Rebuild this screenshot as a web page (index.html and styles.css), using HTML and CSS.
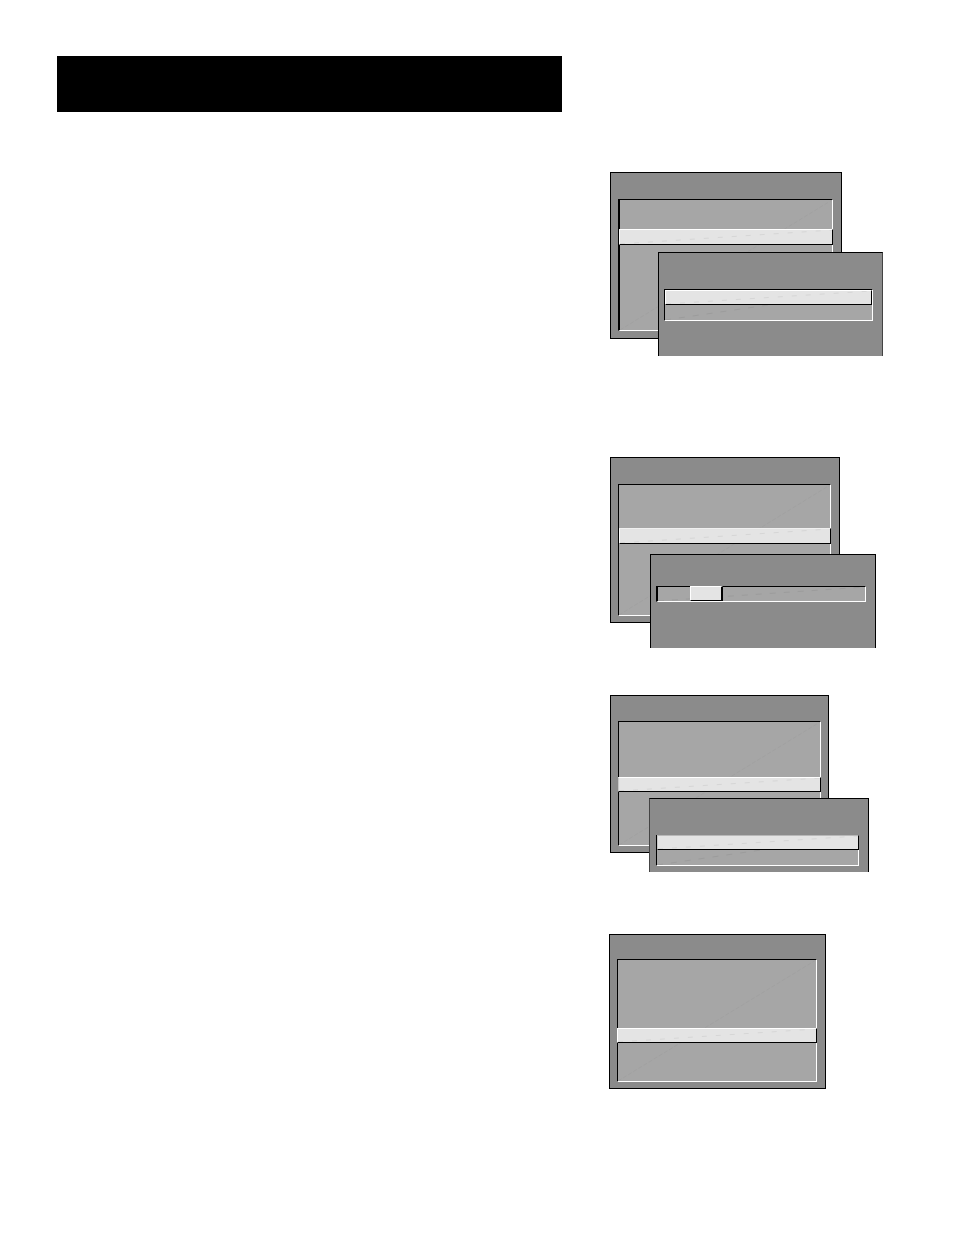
FILE: index.html
```
<!DOCTYPE html>
<html lang="en">
<head>
  <meta charset="UTF-8" />
  <title>Menu Screens</title>
  <link rel="stylesheet" href="styles.css">
</head>
<body>
  <div class="page">
    <header class="title-bar"></header>

    <main class="screens">
      <section class="screen screen-1">
        <div class="panel">
          <div class="list">
            <svg class="sheen" viewBox="0 0 100 100" preserveAspectRatio="none"><line x1="0" y1="100" x2="100" y2="0" /></svg>
            <div class="bar"><svg class="sheen" viewBox="0 0 100 100" preserveAspectRatio="none"><line x1="0" y1="100" x2="100" y2="0" /></svg></div>
          </div>
        </div>
        <div class="panel popup">
          <div class="list">
            <svg class="sheen" viewBox="0 0 100 100" preserveAspectRatio="none"><line x1="0" y1="100" x2="100" y2="0" /></svg>
            <div class="bar"><svg class="sheen" viewBox="0 0 100 100" preserveAspectRatio="none"><line x1="0" y1="100" x2="100" y2="0" /></svg></div>
          </div>
        </div>
      </section>

      <section class="screen screen-2">
        <div class="panel">
          <div class="list">
            <svg class="sheen" viewBox="0 0 100 100" preserveAspectRatio="none"><line x1="0" y1="100" x2="100" y2="0" /></svg>
            <div class="bar"><svg class="sheen" viewBox="0 0 100 100" preserveAspectRatio="none"><line x1="0" y1="100" x2="100" y2="0" /></svg></div>
          </div>
        </div>
        <div class="panel popup">
          <div class="list track">
            <svg class="sheen" viewBox="0 0 100 100" preserveAspectRatio="none"><line x1="0" y1="100" x2="100" y2="0" /></svg>
            <div class="bar thumb"></div>
          </div>
        </div>
      </section>

      <section class="screen screen-3">
        <div class="panel">
          <div class="list">
            <svg class="sheen" viewBox="0 0 100 100" preserveAspectRatio="none"><line x1="0" y1="100" x2="100" y2="0" /></svg>
            <div class="bar"><svg class="sheen" viewBox="0 0 100 100" preserveAspectRatio="none"><line x1="0" y1="100" x2="100" y2="0" /></svg></div>
          </div>
        </div>
        <div class="panel popup">
          <div class="list">
            <svg class="sheen" viewBox="0 0 100 100" preserveAspectRatio="none"><line x1="0" y1="100" x2="100" y2="0" /></svg>
            <div class="bar"><svg class="sheen" viewBox="0 0 100 100" preserveAspectRatio="none"><line x1="0" y1="100" x2="100" y2="0" /></svg></div>
          </div>
        </div>
      </section>

      <section class="screen screen-4">
        <div class="panel">
          <div class="list">
            <svg class="sheen" viewBox="0 0 100 100" preserveAspectRatio="none"><line x1="0" y1="100" x2="100" y2="0" /></svg>
            <div class="bar"><svg class="sheen" viewBox="0 0 100 100" preserveAspectRatio="none"><line x1="0" y1="100" x2="100" y2="0" /></svg></div>
          </div>
        </div>
      </section>
    </main>
  </div>
</body>
</html>
```
FILE: styles.css
```
* {
  box-sizing: border-box;
}
body {
  margin: 0;
  background: #fff;
  font-family: "Liberation Sans", Arial, sans-serif;
}
.page {
  display: grid;
  grid-template-columns: 1fr 274px;
  column-gap: 47px;
  row-gap: 60px;
  padding: 56px 71px 56px 57px;
}
.title-bar {
  height: 56px;
  background: #000;
}
.screens {
  grid-row: 2;
  grid-column: 2;
}
.screen {
  position: relative;
}

/* panels and popups */
.panel {
  padding: 26px 8px 6px 7px;
  background: #8b8b8b;
  border: 1px solid #000;
}
.popup {
  position: absolute;
  border-bottom: 0;
}

/* sunken list with the highlighted row */
.list {
  position: relative;
  background: #a6a6a6;
  border: 1px solid;
  border-color: #000 #fff #fff #000;
}
.bar {
  position: relative;
  height: 15px;
  margin-right: -1px;
  background: #e4e4e4;
  border: 1px solid;
  border-color: #fff #000 #000 #fff;
}
.sheen {
  position: absolute;
  top: 0;
  left: 0;
  width: 100%;
  height: 100%;
}
.sheen line {
  stroke: #a1a1a1;
  stroke-width: 1;
  stroke-dasharray: 4 2;
  vector-effect: non-scaling-stroke;
}
.popup .sheen line {
  stroke: #9c9c9c;
  stroke-dasharray: 6 8;
}
.bar .sheen line,
.popup .bar .sheen line {
  stroke: #d6d6d6;
  stroke-dasharray: 5 9;
}

.screen-1 {
  margin-bottom: 101px;
  padding: 0 41px 17px 1px;
}
.screen-1 .panel {
  padding-bottom: 7px;
}
.screen-1 .list {
  padding: 29px 0 85px;
  border-left-width: 2px;
}
.screen-1 .bar {
  height: 16px;
  margin-left: -1px;
}
.screen-1 .popup {
  top: 80px;
  left: 49px;
  right: 0;
  padding: 36px 9px 35px 5px;
  border-right-color: #444;
}
.screen-1 .popup .list {
  padding: 0 0 15px;
  border-left-width: 1px;
}
.screen-1 .popup .bar {
  height: 15px;
  margin: 0;
}

.screen-2 {
  margin-bottom: 47px;
  padding: 0 43px 25px 1px;
}
.screen-2 .list {
  padding: 43px 0 71px;
}
.screen-2 .bar {
  height: 16px;
  border-top-color: #f0f0f0;
}
.screen-2 .popup {
  top: 97px;
  left: 41px;
  right: 7px;
  padding: 31px 9px 46px 5px;
}
.screen-2 .track {
  padding: 0;
  border-left-width: 2px;
}
.screen-2 .thumb {
  width: 33px;
  height: 15px;
  margin: -1px 0 0 32px;
  border-top-color: #fff;
  border-right-width: 2px;
}

.screen-3 {
  margin-bottom: 62px;
  padding: 0 54px 19px 1px;
}
.screen-3 .panel {
  padding: 25px 7px 6px;
}
.screen-3 .list {
  padding: 55px 0 53px;
}
.screen-3 .bar {
  margin-left: -1px;
  border-left-color: #c8c8c8;
}
.screen-3 .popup {
  top: 103px;
  left: 40px;
  right: 14px;
  padding: 36px 9px 6px 6px;
  border-left-color: #444;
}
.screen-3 .popup .list {
  padding: 0 0 15px;
}
.screen-3 .popup .bar {
  margin: -1px -1px 0 0;
  border-top-color: #b8b8b8;
}

.screen-4 {
  padding-right: 57px;
}
.screen-4 .panel {
  padding-top: 24px;
}
.screen-4 .list {
  padding: 68px 0 38px;
}
.screen-4 .bar {
  margin-left: -1px;
}
```
